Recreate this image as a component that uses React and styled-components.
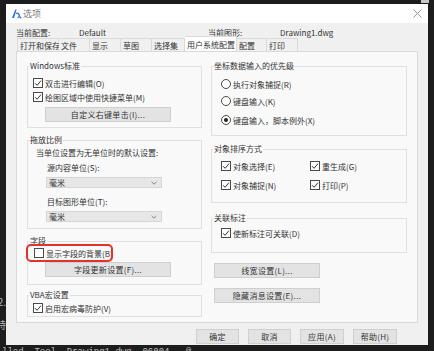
import React from "react";
import styled, { createGlobalStyle } from "styled-components";

const GlobalStyle = createGlobalStyle`
  html, body {
    margin: 0;
    padding: 0;
    background: #1d1d1d;
  }
  body {
    font-family: "Noto Sans CJK SC", "Liberation Sans", sans-serif;
  }
`;

const Desktop = styled.div`
  width: 434px;
  height: 351px;
  overflow: hidden;
  background: #1d1d1d;
  display: flex;
  flex-direction: column;
`;

const TopStrip = styled.div`
  height: 4px;
  flex: none;
  display: flex;
  justify-content: flex-end;
  padding-right: 5px;
`;

const Nub = styled.div`
  width: 8px;
  height: 3px;
  background: #c9c9c9;
`;

const Middle = styled.div`
  display: flex;
  height: 341px;
  flex: none;
`;

const SideStrip = styled.div`
  width: 6px;
  flex: none;
  overflow: hidden;
  display: flex;
  flex-direction: column;
  align-items: flex-end;
  padding-top: 292px;
  color: #b5b5b5;
  font-size: 10px;
  line-height: 12px;
`;

const SideLine = styled.span`
  white-space: nowrap;
  margin-top: ${(p) => p.$mt || 0}px;
`;

const BottomStrip = styled.div`
  height: 6px;
  flex: none;
  overflow: hidden;
  color: #bdbdbd;
  font-family: "Liberation Mono", monospace;
  font-size: 9px;
  line-height: 10px;
  padding: 2px 0 0 2px;
  white-space: pre;
`;

const Dialog = styled.div`
  width: 422px;
  flex: none;
  background: #f0f0f0;
  display: flex;
  flex-direction: column;
  color: #333;
  font-size: 8px;
`;

const TitleBar = styled.div`
  height: 19px;
  flex: none;
  background: #fff;
  display: flex;
  align-items: center;
  padding: 0 6px 0 5px;
`;

const Title = styled.span`
  margin-left: 1px;
  font-size: 9px;
  color: #7a7a7a;
  flex: 1;
`;

const InfoRow = styled.div`
  height: 13px;
  box-sizing: border-box;
  padding: 5px 0 0 10px;
  display: flex;
  align-items: center;
  white-space: nowrap;
`;

const InfoCell = styled.span`
  width: ${(p) => p.$w}px;
  flex: none;
`;

const Tabs = styled.div`
  height: 15px;
  display: flex;
  align-items: flex-end;
  padding-left: 11px;
`;

const Tab = styled.div`
  width: ${(p) => p.$w}px;
  height: ${(p) => (p.$active ? 15 : 13)}px;
  box-sizing: border-box;
  flex: none;
  padding-left: 2px;
  display: flex;
  align-items: center;
  background: ${(p) => (p.$active ? "#fff" : "#f0f0f0")};
  border-top: 1px solid #dadada;
  border-right: 1px solid #dadada;
  border-left: ${(p) => (p.$first ? "1px solid #dadada" : "none")};
  white-space: nowrap;
`;

const Panel = styled.div`
  margin: 0 10px;
  height: 272px;
  box-sizing: border-box;
  border: 1px solid #d9d9d9;
  background: #f9f9f9;
  padding: 9px 10px 0 10px;
  display: grid;
  grid-template-columns: 175px 196px;
  column-gap: 9px;
  align-items: start;
`;

const Column = styled.div`
  display: flex;
  flex-direction: column;
`;

const Group = styled.fieldset`
  margin: 0;
  margin-top: ${(p) => p.$mt || 0}px;
  padding: 0;
  min-width: 0;
  box-sizing: border-box;
  height: ${(p) => p.$h}px;
  border: 1px solid #e0e0e0;
  display: flex;
  flex-direction: column;
  align-items: flex-start;
`;

const Legend = styled.legend`
  padding: 0 1px;
  margin-left: 1px;
  font-size: 8px;
  line-height: 10px;
  color: #333;
  white-space: nowrap;
`;

const Row = styled.label`
  display: flex;
  align-items: center;
  gap: 2px;
  height: 14px;
  box-sizing: border-box;
  margin-top: ${(p) => p.$mt || 0}px;
  padding-left: ${(p) => p.$pl || 0}px;
  white-space: nowrap;
`;

const Highlight = styled(Row)`
  width: 83px;
  outline: 2px solid #e4312b;
  border-radius: 3px;
`;

const Text = styled.div`
  height: 12px;
  line-height: 12px;
  margin-top: ${(p) => p.$mt || 0}px;
  margin-left: ${(p) => p.$ml || 0}px;
  white-space: nowrap;
`;

const Box = styled.span`
  width: 10px;
  height: 10px;
  box-sizing: border-box;
  flex: none;
  border: 1px solid #4a4a4a;
  background: #fff;
  display: flex;
  align-items: center;
  justify-content: center;
`;

const Radio = styled.span`
  width: 10px;
  height: 10px;
  box-sizing: border-box;
  flex: none;
  border: 1px solid #4a4a4a;
  border-radius: 50%;
  background: #fff;
  display: flex;
  align-items: center;
  justify-content: center;

  &::after {
    content: "";
    width: 4px;
    height: 4px;
    border-radius: 50%;
    background: ${(p) => (p.$on ? "#222" : "transparent")};
  }
`;

const Button = styled.div`
  width: ${(p) => p.$w}px;
  height: 15px;
  box-sizing: border-box;
  flex: none;
  margin-top: ${(p) => p.$mt || 0}px;
  margin-left: ${(p) => p.$ml || 0}px;
  background: #e3e3e3;
  border: 1px solid #cfcfcf;
  display: flex;
  align-items: center;
  justify-content: center;
  white-space: nowrap;
  letter-spacing: 0.3px;
`;

const Select = styled.div`
  width: 116px;
  height: 11px;
  box-sizing: border-box;
  margin-top: ${(p) => p.$mt || 0}px;
  margin-left: 18px;
  background: #e7e7e7;
  border: 1px solid #d6d6d6;
  display: flex;
  align-items: center;
  justify-content: space-between;
  padding: 0 4px 0 2px;
`;

const SortGrid = styled.div`
  display: grid;
  grid-template-columns: 89px auto;
  row-gap: 5px;
  margin-top: 5px;
  padding-left: 9px;
`;

const Footer = styled.div`
  display: flex;
  justify-content: flex-end;
  gap: 9px;
  margin-top: 6px;
  padding-right: 31px;
`;

const Check = ({ on = true }) => (
  <Box>
    {on && (
      <svg width="8" height="8" viewBox="0 0 8 8">
        <path d="M1 4.2 L3.1 6.3 L7 1.6" fill="none" stroke="#333" strokeWidth="1" />
      </svg>
    )}
  </Box>
);

const CheckRow = ({ label, on, mt, pl }) => (
  <Row $mt={mt} $pl={pl}>
    <Check on={on} />
    <span>{label}</span>
  </Row>
);

const RadioRow = ({ label, on, mt }) => (
  <Row $mt={mt} $pl={9}>
    <Radio $on={on} />
    <span>{label}</span>
  </Row>
);

const Chevron = () => (
  <svg width="6" height="4" viewBox="0 0 6 4">
    <path d="M0.5 0.8 L3 3.2 L5.5 0.8" fill="none" stroke="#777" strokeWidth="0.9" />
  </svg>
);

const AppIcon = () => (
  <svg width="11" height="11" viewBox="0 0 11 11">
    <path d="M1 10 L4.3 1.5 L5.6 1.5 L3 10 Z" fill="#2a6fd8" />
    <path d="M4.8 5.5 Q7.5 4.5 8.2 7 Q8.6 9 6.6 9.6" fill="none" stroke="#2a6fd8" strokeWidth="1.3" />
    <circle cx="9.3" cy="9.4" r="1" fill="#2a6fd8" />
  </svg>
);

const CloseIcon = () => (
  <svg width="9" height="9" viewBox="0 0 9 9">
    <path d="M0.5 0.5 L8.5 8.5 M8.5 0.5 L0.5 8.5" stroke="#8a8a8a" strokeWidth="0.9" />
  </svg>
);

const tabs = [
  ["打开和保存", 42],
  ["文件", 31],
  ["显示", 31],
  ["草图", 31],
  ["选择集", 33],
  ["用户系统配置", 52],
  ["配置", 30],
  ["打印", 31],
];

export default function App() {
  return (
    <>
      <GlobalStyle />
      <Desktop>
        <TopStrip>
          <Nub />
        </TopStrip>
        <Middle>
          <SideStrip>
            <SideLine>1.2.</SideLine>
            <SideLine $mt={11}>特</SideLine>
          </SideStrip>
          <Dialog>
            <TitleBar>
              <AppIcon />
              <Title>选项</Title>
              <CloseIcon />
            </TitleBar>

            <InfoRow>
              <InfoCell $w={63}>当前配置:</InfoCell>
              <InfoCell $w={129}>Default</InfoCell>
              <InfoCell $w={72}>当前图形:</InfoCell>
              <InfoCell $w={80}>Drawing1.dwg</InfoCell>
            </InfoRow>

            <Tabs>
              {tabs.map(([name, w], i) => (
                <Tab key={name} $w={w} $first={i === 0} $active={name === "用户系统配置"}>
                  {name}
                </Tab>
              ))}
            </Tabs>

            <Panel>
              <Column>
                <Group $h={67}>
                  <Legend>Windows标准</Legend>
                  <CheckRow label="双击进行编辑(O)" mt={5} pl={5} />
                  <CheckRow label="绘图区域中使用快捷菜单(M)" pl={5} />
                  <Button $w={126} $mt={3} $ml={17}>自定义右键单击(I)...</Button>
                </Group>

                <Group $h={94} $mt={7}>
                  <Legend>拖放比例</Legend>
                  <Text $mt={2} $ml={8}>当单位设置为无单位时的默认设置:</Text>
                  <Text $mt={3} $ml={19}>源内容单位(S):</Text>
                  <Select $mt={3}>
                    <span>毫米</span>
                    <Chevron />
                  </Select>
                  <Text $mt={8} $ml={19}>目标图形单位(T):</Text>
                  <Select $mt={3}>
                    <span>毫米</span>
                    <Chevron />
                  </Select>
                </Group>

                <Group $h={49} $mt={7}>
                  <Legend>字段</Legend>
                  <Highlight $pl={6}>
                    <Check on={false} />
                    <span>显示字段的背景(B)</span>
                  </Highlight>
                  <Button $w={126} $mt={2} $ml={17}>字段更新设置(F)...</Button>
                </Group>

                <Group $h={27} $mt={5}>
                  <Legend>VBA宏设置</Legend>
                  <CheckRow label="启用宏病毒防护(V)" mt={1} pl={5} />
                </Group>
              </Column>

              <Column>
                <Group $h={75}>
                  <Legend>坐标数据输入的优先级</Legend>
                  <RadioRow label="执行对象捕捉(R)" mt={6} />
                  <RadioRow label="键盘输入(K)" mt={3} />
                  <RadioRow label="键盘输入，脚本例外(X)" mt={5} on />
                </Group>

                <Group $h={59} $mt={8}>
                  <Legend>对象排序方式</Legend>
                  <SortGrid>
                    <CheckRow label="对象选择(E)" />
                    <CheckRow label="重生成(G)" />
                    <CheckRow label="对象捕捉(N)" />
                    <CheckRow label="打印(P)" />
                  </SortGrid>
                </Group>

                <Group $h={40} $mt={10}>
                  <Legend>关联标注</Legend>
                  <CheckRow label="使新标注可关联(D)" mt={3} pl={9} />
                </Group>

                <Button $w={106} $mt={10} $ml={3}>线宽设置(L)...</Button>
                <Button $w={106} $mt={10} $ml={3}>隐藏消息设置(E)...</Button>
              </Column>
            </Panel>

            <Footer>
              <Button $w={43}>确定</Button>
              <Button $w={43}>取消</Button>
              <Button $w={44}>应用(A)</Button>
              <Button $w={44}>帮助(H)</Button>
            </Footer>
          </Dialog>
        </Middle>
        <BottomStrip>{"lled  Tool  Drawing1.dwg  06004   @"}</BottomStrip>
      </Desktop>
    </>
  );
}
